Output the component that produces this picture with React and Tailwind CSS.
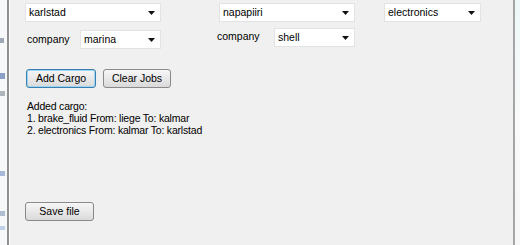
import React from 'react';

const font = { fontFamily: '"Liberation Sans", Arial, sans-serif' };

const Arrow = () => (
  <svg width="7" height="4" viewBox="0 0 7 4" className="shrink-0">
    <path d="M0 0h7L3.5 4z" fill="#111" />
  </svg>
);

const Combo = ({ value, className }) => (
  <div
    className={`flex items-center justify-between h-[19px] bg-white border border-[#e3e3e3] pl-[3px] pr-[5px] text-[10.5px] text-black ${className}`}
  >
    <span className="leading-none">{value}</span>
    <Arrow />
  </div>
);

const Button = ({ children, focused, className }) => (
  <div
    className={`flex items-center justify-center h-[19px] rounded-[3px] border text-[10.5px] text-black bg-gradient-to-b from-[#f6f6f6] via-[#e9e9e9] to-[#d9d9d9] ${
      focused ? 'border-[#3c7fb1] shadow-[inset_0_0_0_1px_#9ad6f2]' : 'border-[#8a8a8a]'
    } ${className}`}
  >
    {children}
  </div>
);

export default function App() {
  return (
    <div className="w-[520px] h-[245px] flex overflow-hidden bg-[#f0f0f0]" style={font}>
      {/* left window edge */}
      <div className="w-[7px] h-full bg-[#f7f8f9] flex flex-col items-start">
        <div className="h-[38px]" />
        <div className="w-[4px] h-[5px] bg-[#a0a8b8]" />
        <div className="h-[30px]" />
        <div className="w-[5px] h-[6px] bg-[#8aa0c8]" />
        <div className="h-[12px]" />
        <div className="w-[5px] h-[5px] bg-[#b0b4bc]" />
        <div className="h-[75px]" />
        <div className="w-[5px] h-[5px] bg-[#a8b8d8]" />
        <div className="h-[35px]" />
        <div className="w-[5px] h-[5px] bg-[#b0bcd0]" />
        <div className="h-[10px]" />
        <div className="w-[5px] h-[4px] bg-[#c0d0e8]" />
      </div>
      <div className="w-[2px] h-full bg-[#8f8f8f]" />
      <div className="w-[1px] h-full bg-white" />

      {/* main panel */}
      <div className="flex-1 h-full bg-[#f0f0f0] flex flex-col pl-[15px]">
        <div className="flex mt-[3px]">
          <Combo value="karlstad" className="w-[136px]" />
          <Combo value="napapiiri" className="w-[136px] ml-[58px]" />
          <Combo value="electronics" className="w-[97px] ml-[29px]" />
        </div>
        <div className="flex mt-[6px] text-[10.5px] text-black">
          <div className="flex items-center mt-[2px]">
            <span className="ml-[2px] w-[53px]">company</span>
            <Combo value="marina" className="w-[81px]" />
          </div>
          <div className="flex items-start ml-[56px]">
            <span className="w-[57px] mt-[1px]">company</span>
            <Combo value="shell" className="w-[81px]" />
          </div>
        </div>
        <div className="flex mt-[20px] gap-[7px]">
          <Button focused className="w-[70px] ml-[1px]">Add Cargo</Button>
          <Button className="w-[68px]">Clear Jobs</Button>
        </div>
        <div className="mt-[12px] ml-[2px] text-[10.5px] leading-[12px] tracking-[-0.2px] text-black">
          <div>Added cargo:</div>
          <div>1. brake_fluid From: liege To: kalmar</div>
          <div>2. electronics From: kalmar To: karlstad</div>
        </div>
        <div className="mt-[66px]">
          <Button className="w-[69px]">Save file</Button>
        </div>
      </div>

      {/* right window edge */}
      <div className="w-[2px] h-full bg-[#a5a5a5]" />
      <div className="w-[5px] h-full bg-gradient-to-b from-[#eef8f8] via-[#fafafa] to-[#f7f7f7]" />
    </div>
  );
}
